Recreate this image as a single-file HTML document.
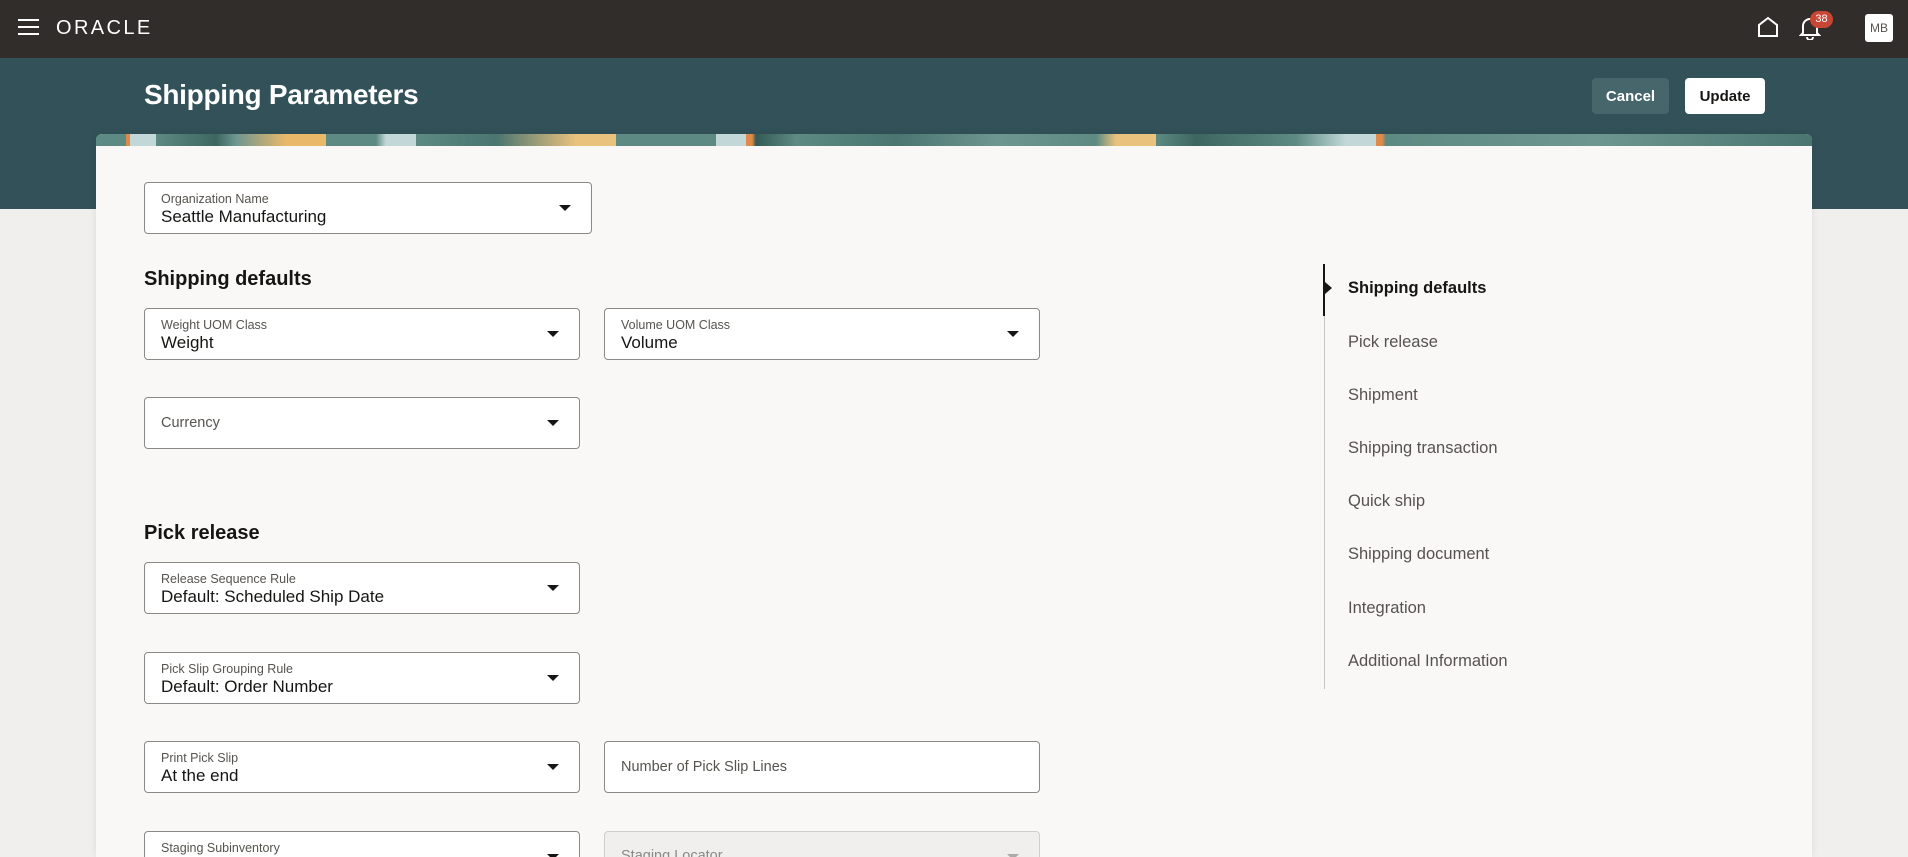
<!DOCTYPE html>
<html style="width:1908px;height:857px;overflow:hidden"><head><meta charset="utf-8"><style>
*{box-sizing:border-box;margin:0;padding:0}
body{width:1908px;height:857px;overflow:hidden;background:#f1efed;font-family:"Liberation Sans",sans-serif;color:#161513;position:relative}
.top{position:absolute;left:0;top:0;width:1908px;height:58px;background:#312d2a}
.teal{position:absolute;left:0;top:58px;width:1908px;height:151px;background:#325158}
.title{position:absolute;left:144px;top:79px;color:#fff;font-size:28px;font-weight:bold;letter-spacing:-0.3px}
.btn{position:absolute;top:78px;height:36px;border-radius:4px;font-size:15px;font-weight:bold;display:flex;align-items:center;justify-content:center}
.card{position:absolute;left:96px;top:134px;width:1716px;height:723px;background:#f9f8f6;border-radius:6px 6px 0 0;overflow:hidden;box-shadow:0 0 8px rgba(0,0,0,.08)}
.band{position:absolute;left:0;top:0;width:100%;height:12px;background:
linear-gradient(90deg,#5d8a82 0,#5d8a82 30px,#e08a4a 30px,#e08a4a 34px,#c2d8d8 34px,#c2d8d8 60px,#5d8a82 60px,#3d6660 120px,#6e9690 140px,#e9b869 190px,#e9b869 230px,#5d8a82 230px,#5d8a82 280px,#c2d8d8 290px,#c2d8d8 320px,#5d8a82 320px,#4a7570 400px,#e9c27e 480px,#e9c27e 520px,#5d8a82 520px,#5d8a82 620px,#c2d8d8 620px,#c2d8d8 650px,#e08a4a 650px,#e08a4a 656px,#345a55 660px,#5d8a82 700px,#4a7570 800px,#6e9690 900px,#5d8a82 1000px,#e9c27e 1020px,#e9c27e 1060px,#5d8a82 1060px,#3d6660 1100px,#5d8a82 1200px,#c2d8d8 1250px,#c2d8d8 1280px,#e08a4a 1280px,#e08a4a 1286px,#5d8a82 1290px,#6e9690 1500px,#4a7570 1716px)}
.f{position:absolute;height:52px;background:#fff;border:1px solid #8b8986;border-radius:4px}
.f .l{position:absolute;left:16px;top:9px;font-size:12.5px;color:#56534f}
.f .v{position:absolute;left:16px;top:24px;font-size:17px;color:#161513}
.f .p{position:absolute;left:16px;top:17px;font-size:14.5px;color:#56534f}
.f .a{position:absolute;right:20px;top:22px;width:0;height:0;border-left:6px solid transparent;border-right:6px solid transparent;border-top:6px solid #161513}
.h{position:absolute;left:144px;font-size:20px;font-weight:bold}
.nav{position:absolute;left:1324px;top:264px;width:1px;height:425px;background:#c8c6c3}
.navact{position:absolute;left:1323px;top:264px;width:2px;height:52px;background:#161513}
.ni{position:absolute;left:1348px;font-size:16.5px;color:#56534f}
</style></head><body>
<div class="top">
 <div style="position:absolute;left:18px;top:19px;width:21px;height:2px;background:#fff;box-shadow:0 7px 0 #fff,0 14px 0 #fff"></div>
 <div style="position:absolute;left:56px;top:17px;color:#fff;font-size:20px;letter-spacing:2.4px;font-weight:normal">ORACLE</div>
 <svg style="position:absolute;left:1757px;top:16px" width="22" height="22" viewBox="0 0 22 22"><path d="M2 20V9L11 2l9 7v11z" fill="none" stroke="#fff" stroke-width="2"/></svg>
 <svg style="position:absolute;left:1799px;top:16px" width="22" height="24" viewBox="0 0 22 24"><path d="M4 17V10a7 7 0 0 1 14 0v7l2 2H2z" fill="none" stroke="#fff" stroke-width="2"/><path d="M8 21a3 3 0 0 0 6 0" fill="none" stroke="#fff" stroke-width="2"/></svg>
 <div style="position:absolute;left:1810px;top:11px;width:23px;height:17px;border-radius:9px;background:#c74634;color:#fff;font-size:11px;text-align:center;line-height:17px">38</div>
 <div style="position:absolute;left:1865px;top:14px;width:28px;height:28px;border-radius:3px;background:#fff;color:#56534f;font-size:12px;text-align:center;line-height:28px">MB</div>
</div>
<div class="teal"></div>
<div class="title">Shipping Parameters</div>
<div class="btn" style="left:1592px;width:77px;background:#46666b;color:#fff">Cancel</div>
<div class="btn" style="left:1685px;width:80px;background:#fff;color:#161513">Update</div>
<div class="card"><div class="band"></div></div>

<div class="f" style="left:144px;top:182px;width:448px"><div class="l">Organization Name</div><div class="v">Seattle Manufacturing</div><div class="a"></div></div>
<div class="h" style="top:268px">Shipping defaults</div>
<div class="f" style="left:144px;top:308px;width:436px"><div class="l">Weight UOM Class</div><div class="v">Weight</div><div class="a"></div></div>
<div class="f" style="left:604px;top:308px;width:436px"><div class="l">Volume UOM Class</div><div class="v">Volume</div><div class="a"></div></div>
<div class="f" style="left:144px;top:397px;width:436px"><div class="p">Currency</div><div class="a"></div></div>
<div class="h" style="top:522px">Pick release</div>
<div class="f" style="left:144px;top:562px;width:436px"><div class="l">Release Sequence Rule</div><div class="v">Default: Scheduled Ship Date</div><div class="a"></div></div>
<div class="f" style="left:144px;top:652px;width:436px"><div class="l">Pick Slip Grouping Rule</div><div class="v">Default: Order Number</div><div class="a"></div></div>
<div class="f" style="left:144px;top:741px;width:436px"><div class="l">Print Pick Slip</div><div class="v">At the end</div><div class="a"></div></div>
<div class="f" style="left:604px;top:741px;width:436px"><div class="p">Number of Pick Slip Lines</div></div>
<div class="f" style="left:144px;top:831px;width:436px"><div class="l">Staging Subinventory</div><div class="a"></div></div>
<div class="f" style="left:604px;top:831px;width:436px;background:#f0efed;border-color:#d0cecb"><div class="p" style="top:16px;color:#8b8986">Staging Locator</div><div class="a" style="border-top-color:#aaa"></div></div>

<div class="nav"></div><div class="navact"></div>
<div style="position:absolute;left:1325px;top:282px;width:0;height:0;border-top:6px solid transparent;border-bottom:6px solid transparent;border-left:7px solid #161513"></div>
<div class="ni" style="top:279px;color:#161513;font-weight:bold">Shipping defaults</div>
<div class="ni" style="top:333px">Pick release</div>
<div class="ni" style="top:386px">Shipment</div>
<div class="ni" style="top:439px">Shipping transaction</div>
<div class="ni" style="top:492px">Quick ship</div>
<div class="ni" style="top:545px">Shipping document</div>
<div class="ni" style="top:599px">Integration</div>
<div class="ni" style="top:652px">Additional Information</div>
</body></html>
